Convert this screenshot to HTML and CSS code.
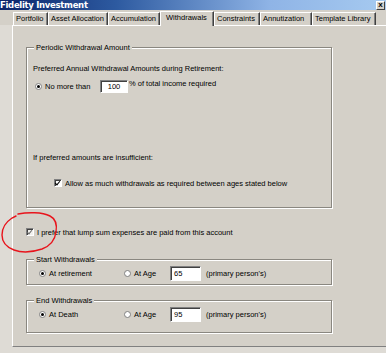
FILE: index.html
```html
<!DOCTYPE html>
<html>
<head>
<meta charset="utf-8">
<link rel="stylesheet" href="styles.css">
</head>
<body>
<div class="titlebar">
  <span class="title">Fidelity Investment</span>
  <span class="close">x</span>
</div>
<div class="tabs">
  <div class="tab t1">Portfolio</div>
  <div class="tab t2">Asset Allocation</div>
  <div class="tab t3">Accumulation</div>
  <div class="tab active t4">Withdrawals</div>
  <div class="tab t5">Constraints</div>
  <div class="tab t6">Annutization</div>
  <div class="tab t7">Template Library</div>
</div>
<div class="main">
  <div class="strip"></div>
  <div class="panel">
    <div class="group g1">
      <div class="legend">Periodic Withdrawal Amount</div>
      <div class="line pref">Preferred Annual Withdrawal Amounts during Retirement:</div>
      <div class="row amount">
        <span class="radio on"></span>
        <span class="lbl nomore">No more than</span>
        <span class="box b100">100</span>
        <span class="sup">% of total income required</span>
      </div>
      <div class="line insuff">If preferred amounts are insufficient:</div>
      <div class="row allow">
        <span class="check on"></span>
        <span class="lbl">Allow as much withdrawals as required between ages stated below</span>
      </div>
    </div>
    <div class="row lump">
      <span class="check on light"></span>
      <span class="lbl">I prefer that lump sum expenses are paid from this account</span>
    </div>
    <div class="group g2">
      <div class="legend">Start Withdrawals</div>
      <div class="agerow">
        <span class="opt o1"><span class="radio on"></span><span class="lbl">At retirement</span></span>
        <span class="opt o2"><span class="radio"></span><span class="lbl">At Age</span></span>
        <span class="box bage">65</span>
        <span class="lbl note">(primary person's)</span>
      </div>
    </div>
    <div class="group g3">
      <div class="legend">End Withdrawals</div>
      <div class="agerow">
        <span class="opt o1"><span class="radio on"></span><span class="lbl">At Death</span></span>
        <span class="opt o2"><span class="radio"></span><span class="lbl">At Age</span></span>
        <span class="box bage">95</span>
        <span class="lbl note">(primary person's)</span>
      </div>
    </div>
  </div>
</div>
<div class="bottomstrip"></div>
<svg class="circle" width="64" height="48" viewBox="0 0 64 48">
  <path d="M18 4 C28 2 42 2 50 6 C56 9 57 16 56 22 C55 30 50 36 42 39 C33 42 22 43 14 40 C6 37 2 32 2 25 C2 18 6 12 12 8 L16 6" fill="none" stroke="#e8141c" stroke-width="1.4" stroke-linecap="round"/>
</svg>
</body>
</html>
```
FILE: styles.css
```css
* { box-sizing: border-box; }
html, body { margin: 0; padding: 0; }
body {
  width: 386px;
  height: 353px;
  overflow: hidden;
  position: relative;
  background: #dedbd5;
  font-family: "Liberation Sans", Arial, sans-serif;
  font-size: 7.5px;
  color: #000;
}
.titlebar {
  height: 10px;
  display: flex;
  align-items: center;
  justify-content: space-between;
  background: linear-gradient(to right, #0a246a 0%, #2d5aa0 30%, #8fb4e6 70%, #a6caf0 100%);
}
.title {
  color: #fff;
  font-weight: bold;
  font-size: 8.5px;
  line-height: 10px;
  margin-left: 0;
  font-family: "DejaVu Sans", sans-serif;
  letter-spacing: -0.3px;
}
.close {
  width: 9px;
  height: 9px;
  margin-right: 1px;
  background: #d4d0c8;
  border: 1px solid;
  border-color: #fff #404040 #404040 #fff;
  font-weight: bold;
  font-size: 8px;
  line-height: 6px;
  text-align: center;
}
.tabs {
  height: 15px;
  display: flex;
  align-items: flex-end;
  padding-left: 13px;
  background: #d4d0c8;
}
.tab {
  height: 13px;
  border-left: 1px solid #fff;
  border-top: 1px solid #fff;
  border-right: 1px solid #404040;
  box-shadow: inset -1px 0 0 #808080;
  padding-left: 2px;
  line-height: 11px;
  white-space: nowrap;
}
.t1 { width: 35px; }
.t2 { width: 60px; }
.t3 { width: 52px; }
.t4 { width: 54px; }
.t5 { width: 46px; }
.t6 { width: 52px; }
.t7 { width: 64px; }
.tab.active {
  height: 15px;
  margin-bottom: -1px;
  background: #d4d0c8;
  position: relative;
  z-index: 1;
  padding-left: 5px;
  line-height: 12px;
}
.main {
  display: flex;
  height: 322px;
}
.strip { width: 12px; background: #dedbd5; }
.panel {
  flex: 1;
  background: #d4d0c8;
  border-top: 1px solid #fff;
  border-left: 1px solid #fff;
  border-bottom: 1px solid #808080;
  padding: 21px 0 0 13px;
}
.bottomstrip { height: 6px; }
.group {
  width: 306px;
  border: 1px solid #8a8780;
  box-shadow: inset 1px 1px 0 #fff, 1px 1px 0 #fff;
  padding: 0 6px;
}
.legend {
  width: max-content;
  height: 9px;
  line-height: 9px;
  margin: -5px 0 0 1px;
  padding: 0 2px;
  background: #d4d0c8;
}
.line { height: 10px; line-height: 10px; white-space: nowrap; }
.pref { margin-top: 12px; }
.row { display: flex; align-items: center; white-space: nowrap; }
.amount { margin-top: 6px; height: 13px; padding-left: 2px; }
.insuff { margin-top: 60px; }
.allow { margin-top: 15px; height: 10px; padding-left: 21px; }
.g1 { height: 161px; }
.lump { margin-top: 19px; height: 10px; }
.g2 { margin-top: 22px; height: 26px; }
.g3 { margin-top: 15px; height: 33px; }
.radio {
  width: 7px;
  height: 7px;
  border-radius: 50%;
  background: #fff;
  border: 1px solid #808080;
  display: inline-flex;
  align-items: center;
  justify-content: center;
  flex: none;
}
.radio.on::after {
  content: "";
  width: 3px;
  height: 3px;
  border-radius: 50%;
  background: #000;
}
.check {
  width: 8px;
  height: 8px;
  background: #fff;
  border: 1px solid;
  border-color: #808080 #fff #fff #808080;
  box-shadow: inset 1px 1px 0 #404040;
  position: relative;
  flex: none;
}
.check.on::after {
  content: "";
  position: absolute;
  left: 1px;
  top: 0px;
  width: 2px;
  height: 4px;
  border: solid #000;
  border-width: 0 1.5px 1.5px 0;
  transform: rotate(40deg);
}
.check.light { background: #f2f1ee; }
.check.light::after { border-color: #6a6a6a; }
.lbl { margin-left: 3px; }
.nomore { width: 55px; }
.box {
  height: 13px;
  background: #fff;
  border: 1px solid;
  border-color: #808080 #fff #fff #808080;
  box-shadow: inset 1px 1px 0 #404040;
  display: inline-flex;
  align-items: center;
  justify-content: center;
  flex: none;
}
.b100 { width: 28px; }
.sup { margin-left: 1px; align-self: flex-start; line-height: 8px; }
.agerow {
  display: flex;
  align-items: center;
  white-space: nowrap;
  height: 15px;
  margin-top: 2px;
  padding-left: 6px;
}
.opt { display: flex; align-items: center; }
.o1 { width: 85px; }
.o2 { width: 46px; }
.bage { width: 31px; height: 15px; justify-content: flex-start; padding-left: 3px; }
.note { margin-left: 5px; }
.circle {
  position: absolute;
  left: 0;
  top: 210px;
}
```
